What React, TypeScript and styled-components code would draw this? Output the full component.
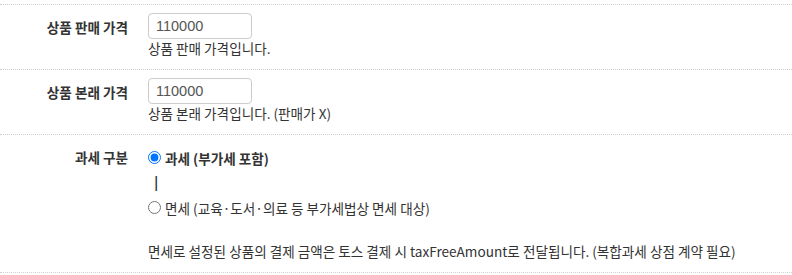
import React from "react";
import styled, { createGlobalStyle } from "styled-components";

const Global = createGlobalStyle`
  html, body { margin: 0; padding: 0; background: #fff; }
  body {
    font-family: "Noto Sans CJK KR", "Noto Sans", sans-serif;
    font-size: 13.6px;
    color: #333;
  }
`;

const Wrap = styled.div`
  padding-top: 4px;
`;

const Row = styled.div<{ $last?: boolean }>`
  display: grid;
  grid-template-columns: 128px 1fr;
  column-gap: 20px;
  padding: 8px 0 12px;
  border-top: 1px dotted #cfcfcf;
  border-bottom: ${(p) => (p.$last ? "1px dotted #cfcfcf" : "none")};
`;

const Label = styled.div`
  text-align: right;
  font-weight: 700;
  line-height: 18px;
  padding-top: 5px;
  color: #333;
  white-space: nowrap;
`;

const Cell = styled.div`
  display: flex;
  flex-direction: column;
  align-items: flex-start;
`;

const TextInput = styled.input`
  box-sizing: border-box;
  width: 104px;
  height: 26px;
  padding: 0 7px;
  border: 1px solid #ccc;
  border-radius: 4px;
  font-family: "Liberation Sans", Arial, sans-serif;
  font-size: 14.5px;
  color: #555;
  outline: none;
  background: #fff;
`;

const Help = styled.div<{ $gap?: number }>`
  line-height: 18px;
  margin-top: ${(p) => p.$gap ?? 0}px;
  color: #333;
  white-space: nowrap;
`;

const RadioGroup = styled.div`
  margin-top: 2px;
  display: flex;
  flex-direction: column;
`;

const RadioLine = styled.label<{ $bold?: boolean }>`
  display: flex;
  align-items: center;
  height: 25px;
  font-weight: ${(p) => (p.$bold ? 700 : 400)};
  cursor: pointer;
  white-space: nowrap;
`;

const Radio = styled.input`
  width: 13px;
  height: 13px;
  margin: 0 4px 0 0;
`;

const Caret = styled.div`
  height: 25px;
  line-height: 25px;
  padding-left: 6px;
  font-family: "Liberation Sans", Arial, sans-serif;
  font-size: 17px;
  font-weight: 400;
  color: #333;
`;

export default function App() {
  return (
    <>
      <Global />
      <Wrap>
        <Row>
          <Label>상품 판매 가격</Label>
          <Cell>
            <TextInput defaultValue="110000" />
            <Help>상품 판매 가격입니다.</Help>
          </Cell>
        </Row>
        <Row>
          <Label>상품 본래 가격</Label>
          <Cell>
            <TextInput defaultValue="110000" />
            <Help>상품 본래 가격입니다. (판매가 X)</Help>
          </Cell>
        </Row>
        <Row $last>
          <Label>과세 구분</Label>
          <Cell>
            <RadioGroup>
              <RadioLine $bold>
                <Radio type="radio" name="tax" defaultChecked />
                과세 (부가세 포함)
              </RadioLine>
              <Caret>|</Caret>
              <RadioLine>
                <Radio type="radio" name="tax" />
                면세 (교육·도서·의료 등 부가세법상 면세 대상)
              </RadioLine>
            </RadioGroup>
            <Help $gap={22}>
              면세로 설정된 상품의 결제 금액은 토스 결제 시 taxFreeAmount로 전달됩니다. (복합과세 상점 계약 필요)
            </Help>
          </Cell>
        </Row>
      </Wrap>
    </>
  );
}
